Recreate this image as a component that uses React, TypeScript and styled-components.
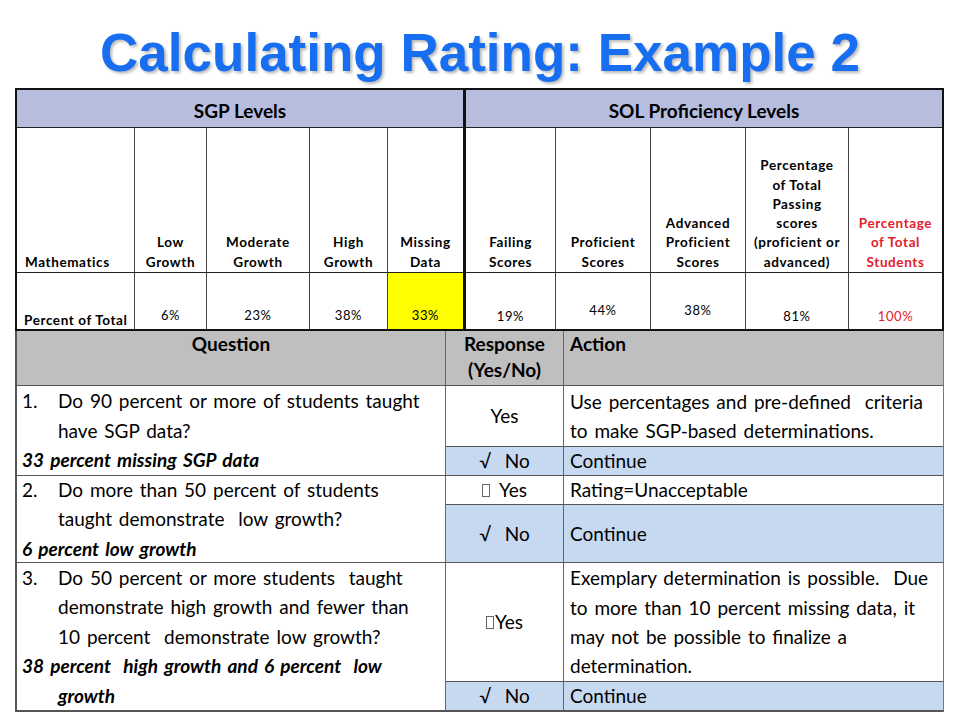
import React from "react";
import styled, { createGlobalStyle } from "styled-components";

const Global = createGlobalStyle`
  html, body { margin: 0; padding: 0; background: #fff; }
  body { font-family: Lato, "Open Sans", sans-serif; color: #000; }
  * { box-sizing: border-box; }
`;

const Page = styled.div`
  width: 960px;
  height: 720px;
  overflow: hidden;
  background: #fff;
  display: flex;
  flex-direction: column;
`;

const Title = styled.h1`
  margin: 0;
  height: 88px;
  padding-top: 24px;
  font: bold 53px/58px "Liberation Sans", Arial, sans-serif;
  color: #176ef0;
  text-align: center;
  white-space: nowrap;
  text-shadow: 2px 2px 3px rgba(0, 0, 0, 0.28);
`;

/* ---------- Top table ---------- */

const Levels = styled.div`
  margin-left: 15px;
  width: 929px;
  border: 2px solid #111;
  display: grid;
  grid-template-columns: 118px 72px 103px 78px 78px 90px 95px 95px 103px 93px;
  grid-template-rows: 38px 145px 56px;
  font-weight: bold;
`;

type Divider = "thin" | "thick" | "none";

const dividerCss = (d: Divider) =>
  d === "thick" ? "3px solid #111" : d === "none" ? "none" : "1px solid #444";

const Band = styled.div<{ $divider: Divider }>`
  grid-column: span 5;
  background: #b6bddf;
  border-bottom: 1px solid #222;
  border-right: ${(p) => dividerCss(p.$divider)};
  display: flex;
  align-items: center;
  justify-content: center;
  padding-top: 4px;
  font-size: 19px;
  font-weight: bold;
`;

const LabelCell = styled.div<{ $divider: Divider; $left?: boolean; $red?: boolean }>`
  display: flex;
  flex-direction: column;
  justify-content: flex-end;
  align-items: ${(p) => (p.$left ? "flex-start" : "center")};
  padding-left: ${(p) => (p.$left ? "8px" : "0")};
  border-right: ${(p) => dividerCss(p.$divider)};
  border-bottom: 1px solid #222;
  font-size: 13.5px;
  letter-spacing: 0.6px;
  line-height: 19.3px;
  text-align: center;
  color: ${(p) => (p.$red ? "#e3202b" : "#000")};
`;

const LabelLine = styled.span`
  display: block;
  white-space: nowrap;
`;

const ValueCell = styled.div<{ $divider: Divider; $yellow?: boolean; $red?: boolean; $pb: number; $label?: boolean }>`
  display: flex;
  align-items: flex-end;
  justify-content: ${(p) => (p.$label ? "flex-start" : "center")};
  padding-left: ${(p) => (p.$label ? "7px" : "0")};
  padding-bottom: ${(p) => p.$pb}px;
  border-right: ${(p) => dividerCss(p.$divider)};
  background: ${(p) => (p.$yellow ? "#ffff00" : "#fff")};
  color: ${(p) => (p.$red ? "#e3202b" : "#000")};
  font-size: ${(p) => (p.$label ? "13.5px" : "13px")};
  font-weight: ${(p) => (p.$label ? "bold" : "normal")};
  letter-spacing: 0.6px;
  line-height: 17px;
  white-space: nowrap;
`;

/* ---------- Bottom table ---------- */

const Decision = styled.div`
  margin-left: 15px;
  width: 929px;
  border-left: 2px solid #555;
  border-right: 1px solid #777;
  border-bottom: 1px solid #555;
  display: grid;
  grid-template-columns: 429px 118px 1fr;
  grid-template-rows: 55px 61px 29px 29px 58px 119px 29px;
  font-size: 19px;
  word-spacing: 2px;
`;

const HeadCell = styled.div<{ $align: "center" | "left"; $last?: boolean }>`
  background: #bfbfbf;
  border-bottom: 1px solid #555;
  border-right: ${(p) => (p.$last ? "none" : "1px solid #666")};
  font-weight: bold;
  line-height: 26px;
  text-align: ${(p) => p.$align};
  padding-left: ${(p) => (p.$align === "left" ? "6px" : "0")};
`;

const QuestionCell = styled.div`
  grid-row: span 2;
  border-right: 1px solid #666;
  border-bottom: 1px solid #555;
  padding-left: 5px;
  display: flex;
  flex-direction: column;
  justify-content: center;
  line-height: 29.4px;
  min-height: 0;
`;

const Numbered = styled.div`
  display: grid;
  grid-template-columns: 36px 1fr;
`;

const Line = styled.span`
  display: block;
  white-space: pre;
`;

const Note = styled.div`
  font-weight: bold;
  font-style: italic;
`;

const NoteCont = styled.span`
  display: block;
  padding-left: 36px;
`;

const ResponseCell = styled.div<{ $blue?: boolean }>`
  background: ${(p) => (p.$blue ? "#c6d9f1" : "#fff")};
  border-right: 1px solid #666;
  border-bottom: 1px solid #555;
  display: flex;
  align-items: center;
  justify-content: center;
  white-space: pre;
  line-height: 28px;
  min-height: 0;
`;

const ActionCell = styled.div<{ $blue?: boolean }>`
  background: ${(p) => (p.$blue ? "#c6d9f1" : "#fff")};
  border-bottom: 1px solid #555;
  padding-left: 6px;
  display: flex;
  flex-direction: column;
  justify-content: center;
  line-height: 29.4px;
  min-height: 0;
`;

const Tofu = styled.span<{ $gap: number }>`
  display: inline-block;
  width: 8px;
  height: 13px;
  border: 1px solid #666;
  margin-right: ${(p) => p.$gap}px;
  vertical-align: -1px;
`;

type Resp = "yes" | "boxYes" | "boxYesTight" | "checkNo";

const ResponseText = ({ kind }: { kind: Resp }) => {
  if (kind === "yes") return <>Yes</>;
  if (kind === "checkNo") return <>{"√  No"}</>;
  return (
    <>
      <Tofu $gap={kind === "boxYes" ? 9 : 1} />
      Yes
    </>
  );
};

interface Sub {
  resp: Resp;
  action: string[];
  blue?: boolean;
}
interface Question {
  num: string;
  lines: string[];
  note: string[];
  subs: Sub[];
}

const questions: Question[] = [
  {
    num: "1.",
    lines: ["Do 90 percent or more of students taught", "have SGP data?"],
    note: ["33 percent missing SGP data"],
    subs: [
      { resp: "yes", action: ["Use percentages and pre-defined  criteria", "to make SGP-based determinations."] },
      { resp: "checkNo", action: ["Continue"], blue: true },
    ],
  },
  {
    num: "2.",
    lines: ["Do more than 50 percent of students", "taught demonstrate  low growth?"],
    note: ["6 percent low growth"],
    subs: [
      { resp: "boxYes", action: ["Rating=Unacceptable"] },
      { resp: "checkNo", action: ["Continue"], blue: true },
    ],
  },
  {
    num: "3.",
    lines: [
      "Do 50 percent or more students  taught",
      "demonstrate high growth and fewer than",
      "10 percent  demonstrate low growth?",
    ],
    note: ["38 percent  high growth and 6 percent  low", "growth"],
    subs: [
      {
        resp: "boxYesTight",
        action: [
          "Exemplary determination is possible.  Due",
          "to more than 10 percent missing data, it",
          "may not be possible to finalize a",
          "determination.",
        ],
      },
      { resp: "checkNo", action: ["Continue"], blue: true },
    ],
  },
];

interface Col {
  label: string[];
  value: string;
  divider: Divider;
  pb: number;
  red?: boolean;
  yellow?: boolean;
}

const cols: Col[] = [
  { label: ["Low", "Growth"], value: "6%", divider: "thin", pb: 5 },
  { label: ["Moderate", "Growth"], value: "23%", divider: "thin", pb: 5 },
  { label: ["High", "Growth"], value: "38%", divider: "thin", pb: 5 },
  { label: ["Missing", "Data"], value: "33%", divider: "thick", pb: 5, yellow: true },
  { label: ["Failing", "Scores"], value: "19%", divider: "thin", pb: 4 },
  { label: ["Proficient", "Scores"], value: "44%", divider: "thin", pb: 10 },
  { label: ["Advanced", "Proficient", "Scores"], value: "38%", divider: "thin", pb: 10 },
  {
    label: ["Percentage", "of Total", "Passing", "scores", "(proficient or", "advanced)"],
    value: "81%",
    divider: "thin",
    pb: 4,
  },
  { label: ["Percentage", "of Total", "Students"], value: "100%", divider: "none", pb: 4, red: true },
];

export default function App() {
  return (
    <Page>
      <Global />
      <Title>Calculating Rating: Example 2</Title>

      <Levels>
        <Band $divider="thick">SGP Levels</Band>
        <Band $divider="none">SOL Proficiency Levels</Band>

        <LabelCell $divider="thin" $left>
          <LabelLine>Mathematics</LabelLine>
        </LabelCell>
        {cols.map((c, i) => (
          <LabelCell key={"l" + i} $divider={c.divider} $red={c.red}>
            {c.label.map((l, j) => (
              <LabelLine key={j}>{l}</LabelLine>
            ))}
          </LabelCell>
        ))}

        <ValueCell $divider="thin" $pb={0} $label>
          Percent of Total
        </ValueCell>
        {cols.map((c, i) => (
          <ValueCell key={"v" + i} $divider={c.divider} $pb={c.pb} $red={c.red} $yellow={c.yellow}>
            {c.value}
          </ValueCell>
        ))}
      </Levels>

      <Decision>
        <HeadCell $align="center">Question</HeadCell>
        <HeadCell $align="center">
          Response
          <br />
          (Yes/No)
        </HeadCell>
        <HeadCell $align="left" $last>
          Action
        </HeadCell>

        {questions.map((q) => (
          <React.Fragment key={q.num}>
            <QuestionCell>
              <Numbered>
                <span>{q.num}</span>
                <div>
                  {q.lines.map((l, i) => (
                    <Line key={i}>{l}</Line>
                  ))}
                </div>
              </Numbered>
              <Note>
                <Line>{q.note[0]}</Line>
                {q.note[1] && <NoteCont>{q.note[1]}</NoteCont>}
              </Note>
            </QuestionCell>
            {q.subs.map((s, i) => (
              <React.Fragment key={i}>
                <ResponseCell $blue={s.blue}>
                  <ResponseText kind={s.resp} />
                </ResponseCell>
                <ActionCell $blue={s.blue}>
                  {s.action.map((a, j) => (
                    <Line key={j}>{a}</Line>
                  ))}
                </ActionCell>
              </React.Fragment>
            ))}
          </React.Fragment>
        ))}
      </Decision>
    </Page>
  );
}
